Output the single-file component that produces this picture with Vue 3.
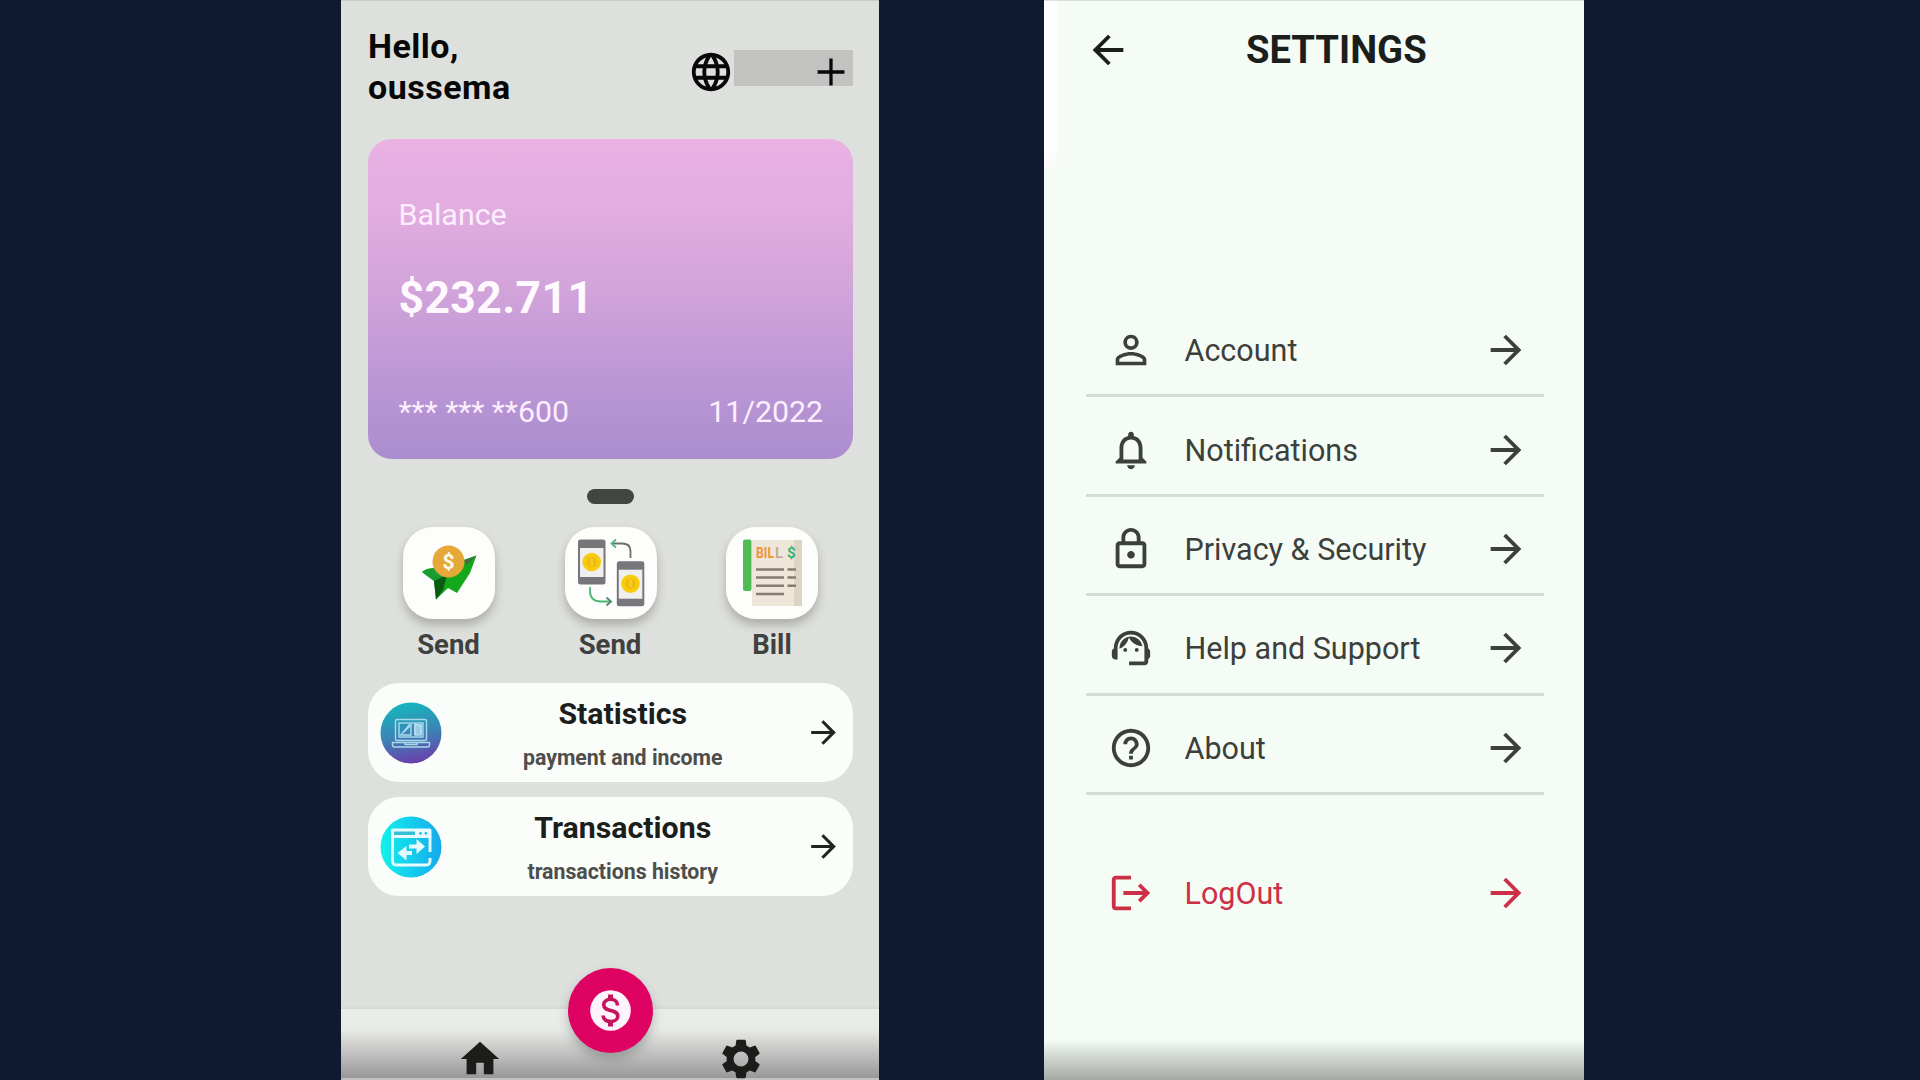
<script setup>
const menu = [
  {
    label: 'Account',
    icon: 'M12 5.9a2.1 2.1 0 1 1 0 4.2 2.1 2.1 0 0 1 0-4.2m0 9c2.97 0 6.1 1.46 6.1 2.1v1.1H5.9V17c0-.64 3.13-2.1 6.1-2.1M12 4C9.79 4 8 5.79 8 8s1.79 4 4 4 4-1.79 4-4-1.79-4-4-4zm0 9c-2.67 0-8 1.34-8 4v3h16v-3c0-2.66-5.33-4-8-4z',
  },
  {
    label: 'Notifications',
    icon: 'M12 22c1.1 0 2-.9 2-2h-4c0 1.1.9 2 2 2zm6-6v-5c0-3.07-1.63-5.64-4.5-6.32V4c0-.83-.67-1.5-1.5-1.5s-1.5.67-1.5 1.5v.68C7.64 5.36 6 7.92 6 11v5l-2 2v1h16v-1l-2-2zm-2 1H8v-6c0-2.48 1.51-4.5 4-4.5s4 2.02 4 4.5v6z',
  },
  {
    label: 'Privacy & Security',
    icon: 'M18 8h-1V6c0-2.76-2.24-5-5-5S7 3.24 7 6v2H6c-1.1 0-2 .9-2 2v10c0 1.1.9 2 2 2h12c1.1 0 2-.9 2-2V10c0-1.1-.9-2-2-2zM9 6c0-1.66 1.34-3 3-3s3 1.34 3 3v2H9V6zm9 14H6V10h12v10zm-6-3c1.1 0 2-.9 2-2s-.9-2-2-2-2 .9-2 2 .9 2 2 2z',
  },
  {
    label: 'Help and Support',
    icon: 'M21 12.22C21 6.73 16.74 3 12 3c-4.69 0-9 3.65-9 9.28-.6.34-1 .98-1 1.72v2c0 1.1.9 2 2 2h1v-6.1c0-3.87 3.13-7 7-7s7 3.13 7 7V19h-8v2h8c1.1 0 2-.9 2-2v-1.22c.59-.31 1-.92 1-1.64v-2.3c0-.7-.41-1.31-1-1.62zM8 13a1 1 0 1 0 2 0 1 1 0 1 0-2 0zM14 13a1 1 0 1 0 2 0 1 1 0 1 0-2 0zM18 11.03A6.04 6.04 0 0 0 12.05 6c-3.03 0-6.29 2.51-6.03 6.45a8.075 8.075 0 0 0 4.86-5.89c1.31 2.63 4 4.44 7.12 4.47z',
  },
  {
    label: 'About',
    icon: 'M11 18h2v-2h-2v2zm1-16C6.48 2 2 6.48 2 12s4.48 10 10 10 10-4.48 10-10S17.52 2 12 2zm0 18c-4.41 0-8-3.59-8-8s3.59-8 8-8 8 3.59 8 8-3.59 8-8 8zm0-14c-2.21 0-4 1.79-4 4h2c0-1.1.9-2 2-2s2 .9 2 2c0 2-3 1.75-3 5h2c0-2.25 3-2.5 3-5 0-2.21-1.79-4-4-4z',
  },
]
const arrow = 'M12 4l-1.41 1.41L16.17 11H4v2h12.17l-5.58 5.59L12 20l8-8z'
</script>

<template>
  <div class="stage">
    <section class="phone home">
      <header class="top">
        <h1 class="greeting">Hello,<br />oussema</h1>
        <div class="tools">
          <svg class="ic" viewBox="0 0 24 24">
            <path d="M11.99 2C6.47 2 2 6.48 2 12s4.47 10 9.99 10C17.52 22 22 17.52 22 12S17.52 2 11.99 2zm6.93 6h-2.95c-.32-1.25-.78-2.45-1.38-3.56 1.84.63 3.37 1.91 4.33 3.56zM12 4.04c.83 1.2 1.48 2.53 1.91 3.96h-3.82c.43-1.43 1.08-2.76 1.91-3.96zM4.26 14C4.1 13.36 4 12.69 4 12s.1-1.36.26-2h3.38c-.08.66-.14 1.32-.14 2s.06 1.34.14 2H4.26zm.82 2h2.95c.32 1.25.78 2.45 1.38 3.56-1.84-.63-3.37-1.9-4.33-3.56zm2.95-8H5.08c.96-1.66 2.49-2.93 4.33-3.56C8.81 5.55 8.35 6.75 8.03 8zM12 19.96c-.83-1.2-1.48-2.53-1.91-3.96h3.82c-.43 1.43-1.08 2.76-1.91 3.96zM14.34 14H9.66c-.09-.66-.16-1.32-.16-2s.07-1.35.16-2h4.68c.09.65.16 1.32.16 2s-.07 1.34-.16 2zm.25 5.56c.6-1.11 1.06-2.31 1.38-3.56h2.95c-.96 1.65-2.49 2.93-4.33 3.56zM16.36 14c.08-.66.14-1.32.14-2s-.06-1.34-.14-2h3.38c.16.64.26 1.31.26 2s-.1 1.36-.26 2h-3.38z" />
          </svg>
          <div class="chip">
            <svg class="ic plus" viewBox="0 0 24 24"><path d="M19 12.85h-6.15V19h-1.7v-6.15H5v-1.7h6.15V5h1.7v6.15H19z" /></svg>
          </div>
        </div>
      </header>

      <article class="card">
        <p class="balance">Balance</p>
        <p class="amount">$232.711</p>
        <div class="meta"><span>*** *** **600</span><span>11/2022</span></div>
      </article>

      <i class="pill"></i>

      <div class="tiles">
        <div class="action">
          <div class="tile">
            <svg viewBox="0 0 92 92">
              <path d="M19 45Q24 40.500 32 41L60 33L73.500 28.500L67 46L54 66L45 61L33 72.500L31 54Z" fill="#14a81b" />
              <path d="M19 45Q26 40.500 34 42L46 50L31 54Z" fill="#1a9c33" />
              <path d="M31 54L44 48L40 63L33 72.500Z" fill="#0b5a12" />
              <path d="M60 34L73.500 28.500L64 38Z" fill="#3f6d45" />
              <circle cx="45.500" cy="34.500" r="16" fill="#e6a839" />
              <text x="45.500" y="42" text-anchor="middle" font-size="21" font-weight="700" fill="#fffbe9">$</text>
            </svg>
          </div>
          <b>Send</b>
        </div>
        <div class="action">
          <div class="tile">
            <svg viewBox="0 0 92 92">
              <g id="device">
                <rect x="13" y="12.500" width="27.500" height="45" rx="2.500" fill="#77777b" />
                <rect x="15" y="21" width="23.500" height="29" fill="#f0eff0" />
                <circle cx="26.700" cy="35" r="9.300" fill="#f8cb0c" />
                <circle cx="26.700" cy="35" r="5.500" fill="#efbd0b" />
                <rect x="25.700" y="31.500" width="2.200" height="7" fill="#f7cf2c" />
              </g>
              <use href="#device" x="38.800" y="21.700" />
              <g fill="none" stroke-width="1.800">
                <path d="M65.500 31V24Q65.500 16.500 57 16.500H48" stroke="#66716b" />
                <path d="M51 12.500L46.500 16.500L51 20.500" stroke="#50b583" />
                <path d="M25 60V64Q25 74.500 36 74.500H45" stroke="#48b774" />
                <path d="M41.500 70.500L46 74.500L41.500 78.500" stroke="#52866a" />
              </g>
            </svg>
          </div>
          <b>Send</b>
        </div>
        <div class="action">
          <div class="tile">
            <svg viewBox="0 0 92 92">
              <rect x="26" y="13" width="50" height="66" fill="#ede6d9" />
              <rect x="68" y="13" width="8" height="66" fill="#ddd4c4" />
              <rect x="17" y="12.500" width="8.500" height="51.500" rx="2" fill="#50bd54" />
              <g font-size="15" font-weight="700">
                <text x="30" y="30.500" fill="#f09335" textLength="18" lengthAdjust="spacingAndGlyphs">BIL</text>
                <text x="49" y="30.500" fill="#b9a893" font-weight="500">L</text>
                <text x="61" y="30.500" fill="#35b271">$</text>
              </g>
              <path d="M30 42.500h28M61.500 42.500h8.500M30 50.500h28M61.500 50.500h8.500M30 58.700h28M61.500 58.700h8.500M30 67h28" stroke="#867d72" stroke-width="2.400" />
            </svg>
          </div>
          <b class="nudge">Bill</b>
        </div>
      </div>

      <div class="links">
        <div class="link">
          <svg class="round" viewBox="0 0 62 62">
            <defs>
              <linearGradient id="stat" x1=".4" y1="0" x2=".6" y2="1">
                <stop offset="0" stop-color="#14b7bd" /><stop offset=".5" stop-color="#3a86b5" /><stop offset="1" stop-color="#6c3dac" />
              </linearGradient>
            </defs>
            <circle cx="31" cy="31" r="30.500" fill="url(#stat)" />
            <g fill="none" stroke="#a9daec" stroke-width="1.400">
              <rect x="15.500" y="17.500" width="31" height="21" rx="1.500" />
              <rect x="19" y="21" width="24" height="14" />
              <path d="M20 34L30 22M24 30l7-7v10h-9M35 22v11h6V24z" />
              <path d="M12.500 40.500h37v2.500q0 2-2.500 2H15q-2.500 0-2.500-2zM25 40.500v2h12v-2" />
            </g>
            <rect x="34" y="22" width="8" height="11" fill="#bfe2f0" opacity=".75" />
          </svg>
          <div class="copy"><h2>Statistics</h2><p>payment and income</p></div>
          <svg class="go" viewBox="0 0 24 24"><path :d="arrow" /></svg>
        </div>
        <div class="link">
          <svg class="round" viewBox="0 0 62 62">
            <defs>
              <linearGradient id="trans"><stop offset="0" stop-color="#12f2ec" /><stop offset="1" stop-color="#16a9ec" /></linearGradient>
            </defs>
            <circle cx="31" cy="31" r="30.500" fill="url(#trans)" />
            <rect x="11" y="12.500" width="40.500" height="9.500" rx="2" fill="#e6fbff" />
            <rect x="14" y="15.500" width="21" height="3.500" fill="#34bfd4" />
            <circle cx="40.500" cy="17.300" r="1.400" fill="#27bce2" /><circle cx="46" cy="17.300" r="1.400" fill="#27bce2" />
            <path d="M50 20V36M50 42v3q0 4-4 4H16.500q-4 0-4-4V20" fill="none" stroke="#e6fbff" stroke-width="2.900" />
            <path d="M29 28.500h7.500v-5.500l8.500 7.500-8.500 7.500v-5.500h-7.500zM32 35v4h-5.500v5.500l-9-7.500 9-7v5z" fill="#e6fbff" />
          </svg>
          <div class="copy"><h2>Transactions</h2><p>transactions history</p></div>
          <svg class="go" viewBox="0 0 24 24"><path :d="arrow" /></svg>
        </div>
      </div>

      <nav class="bar">
        <svg class="ic" viewBox="0 0 24 24"><path d="M10 20v-6h4v6h5v-8h3L12 3 2 12h3v8z" /></svg>
        <svg class="ic" viewBox="0 0 24 24">
          <path d="M19.43 12.98c.04-.32.07-.64.07-.98s-.03-.66-.07-.98l2.110-1.650c.19-.15.24-.42.12-.64l-2-3.460c-.12-.22-.39-.3-.61-.22l-2.490 1c-.52-.4-1.080-.73-1.690-.98l-.38-2.650C14.460 2.180 14.250 2 14 2h-4c-.25 0-.46.18-.49.42l-.38 2.650c-.61.25-1.170.59-1.690.98l-2.490-1c-.23-.09-.49 0-.61.22l-2 3.460c-.13.22-.07.49.12.64l2.110 1.650c-.04.32-.07.65-.07.98s.03.66.07.98l-2.110 1.650c-.19.15-.24.42-.12.64l2 3.460c.12.22.39.3.61.22l2.490-1c.52.4 1.080.73 1.690.98l.38 2.650c.03.24.24.42.49.42h4c.25 0 .46-.18.49-.42l.38-2.650c.61-.25 1.170-.59 1.690-.98l2.490 1c.23.09.49 0 .61-.22l2-3.460c.12-.22.07-.49-.12-.64l-2.110-1.650zM12 15.900a3.900 3.900 0 1 1 0-7.800 3.900 3.900 0 0 1 0 7.800z" />
        </svg>
        <div class="fab">
          <svg viewBox="0 0 41 41">
            <circle cx="20.500" cy="20.500" r="20.300" fill="#fff3fb" />
            <g fill="none" stroke="#c5145e" stroke-width="3.600">
              <path d="M27.500 15.500C27.500 11.500 24.500 9.300 20.500 9.300S13.700 11.500 13.700 14.800C13.700 18.500 17 19.500 20.500 20.500S27.800 22.500 27.800 26.200C27.800 29.500 24.500 31.500 20.500 31.500S13.200 29.500 13.200 25.500" />
              <path d="M20.500 4.500V9M20.500 32V36.500" stroke-width="5" />
            </g>
          </svg>
        </div>
      </nav>
    </section>

    <section class="phone settings">
      <header class="head">
        <svg class="ic back" viewBox="0 0 24 24"><path d="M20 11H7.830l5.590-5.590L12 4l-8 8 8 8 1.410-1.410L7.830 13H20z" /></svg>
        <h1>SETTINGS</h1>
      </header>
      <ul class="menu">
        <li v-for="m in menu" :key="m.label" class="row">
          <svg class="ic" viewBox="0 0 24 24"><path :d="m.icon" /></svg>
          <span>{{ m.label }}</span>
          <svg class="ic" viewBox="0 0 24 24"><path :d="arrow" /></svg>
        </li>
      </ul>
      <div class="row logout">
        <svg class="ic" viewBox="0 0 24 24"><path d="M17 7l-1.410 1.410L18.170 11H8v2h10.170l-2.580 2.580L17 17l5-5M4 5h8V3H4c-1.100 0-2 .9-2 2v14c0 1.100.9 2 2 2h8v-2H4V5z" /></svg>
        <span>LogOut</span>
        <svg class="ic" viewBox="0 0 24 24"><path :d="arrow" /></svg>
      </div>
    </section>
  </div>
</template>

<style>
body { margin: 0; background: #0f1931; overflow: hidden; }
</style>

<style scoped>
* { box-sizing: border-box; }
h1, h2, p, ul { margin: 0; padding: 0; list-style: none; }
svg { display: block; flex: none; }
.stage {
  width: 1920px;
  height: 1080px;
  padding-left: 341px;
  display: flex;
  gap: 165px;
  background: #0f1931;
  font-family: Roboto, "Liberation Sans", sans-serif;
}
.phone { position: relative; display: flex; flex-direction: column; height: 1080px; overflow: hidden; }
.ic { width: 46px; height: 46px; fill: currentColor; }

.home { width: 538px; padding: 0 26px 0 27px; background: #dee0dd; box-shadow: inset 0 1px #c9cbc9; }
.top { display: flex; justify-content: space-between; flex: none; height: 139px; color: #060706; }
.greeting { padding-top: 26px; font-size: 34px; line-height: 41px; font-weight: 700; letter-spacing: 0.5px; }
.tools { display: flex; padding-top: 49px; }
.chip { display: flex; justify-content: flex-end; width: 119px; height: 36px; margin-top: 1px; background: #c2c3c0; }
.plus { margin: -1px -1px 0 0; }

.card {
  flex: none;
  height: 320px;
  padding: 58px 30px 0 30.500px;
  border-radius: 24px;
  background: linear-gradient(#eab1e3 0%, #e2addf 22%, #d2a4da 46%, #bf99d6 70%, #ab8dcf 100%);
  color: #fdeeff;
}
.balance { font-size: 30.400px; line-height: 36px; }
.amount { margin-top: 39px; font-size: 44.500px; line-height: 52px; font-weight: 700; letter-spacing: 0.4px; color: #fff8ff; }
.meta { display: flex; justify-content: space-between; margin-top: 70px; font-size: 30.300px; line-height: 36px; }

.pill { flex: none; align-self: center; width: 47px; height: 15px; margin-top: 30px; border-radius: 8px; background: #434542; }

.tiles { display: flex; justify-content: space-between; margin: 23px 35px 0; }
.action { display: flex; flex-direction: column; align-items: center; width: 92px; }
.tile { width: 92px; height: 92px; border-radius: 30px; background: #fdfefc; box-shadow: 0 6px 10px rgba(60, 60, 60, 0.3); }
.action b { margin: 10px 1px 0 0; font-size: 27.500px; line-height: 32px; color: #3f413f; }
.action .nudge { margin-right: 0; }

.links { display: flex; flex-direction: column; gap: 15px; margin-top: 22px; }
.link { display: flex; align-items: center; height: 99px; padding: 0 12px; border-radius: 31px; background: #fbfdfb; }
.round { width: 62px; height: 62px; margin-left: -0.5px; }
.copy { flex: 1; text-align: center; padding-right: 1px; }
.copy h2 { margin-top: 1px; font-size: 30.300px; line-height: 34px; font-weight: 700; color: #1c1e1c; }
.copy p { margin-top: 15px; font-size: 21.300px; line-height: 24px; font-weight: 700; color: #4c4e4c; }
.copy h2, .copy p { position: relative; top: 0.5px; }
.go { width: 37px; height: 37px; margin-right: -1px; fill: #222422; }

.bar {
  position: absolute;
  left: 0;
  right: 0;
  bottom: 0;
  height: 71px;
  display: flex;
  justify-content: space-between;
  padding: 26.500px 115px 0 116px;
  background: linear-gradient(#ebedea 0, #e9ebe8 20px, #c5c6c4 42px, #979897 69px, #c1c2c0 69px);
  color: #1b1d1a;
}
.bar::before { content: ''; position: absolute; left: 0; right: 0; top: -4px; height: 4px; background: linear-gradient(#dee0dd, #d6d8d5); }
.fab {
  position: absolute;
  left: 227px;
  top: -41px;
  width: 85px;
  height: 85px;
  border-radius: 50%;
  background: #de0362;
  display: grid;
  place-items: center;
  box-shadow: 0 6px 11px rgba(40, 50, 50, 0.28);
}
.fab svg { width: 41px; height: 41px; }

.settings { width: 540px; background: linear-gradient(#f5fcf6 1040px, #d4dad5 1055px, #a5aaa6 1080px); color: #3c403c; }
.settings::before { content: ''; position: absolute; left: 0; top: 0; width: 13px; height: 170px; background: linear-gradient(#fdfefd 150px, #f7fbf8); }
.settings::after { content: ''; position: absolute; left: 0; right: 0; top: 0; height: 1px; background: #dde1de; }
.head { position: relative; display: flex; align-items: center; height: 99px; padding-left: 41px; color: #1b1e1b; flex: none; }
.head h1 { margin-left: 115px; font-size: 38.200px; line-height: 46px; font-weight: 700; }
.menu { margin-top: 199px; }
.row {
  display: flex;
  align-items: center;
  width: 458px;
  height: 99.400px;
  margin-left: 42px;
  padding: 8px 15.500px 0 21.500px;
  border-bottom: 3px solid #d5dcd6;
  font-size: 30.500px;
  line-height: 36px;
}
.row span { flex: 1; margin: 2px 0 0 31px; }
.logout { margin-top: 46px; border-color: transparent; color: #cd3046; }
</style>
